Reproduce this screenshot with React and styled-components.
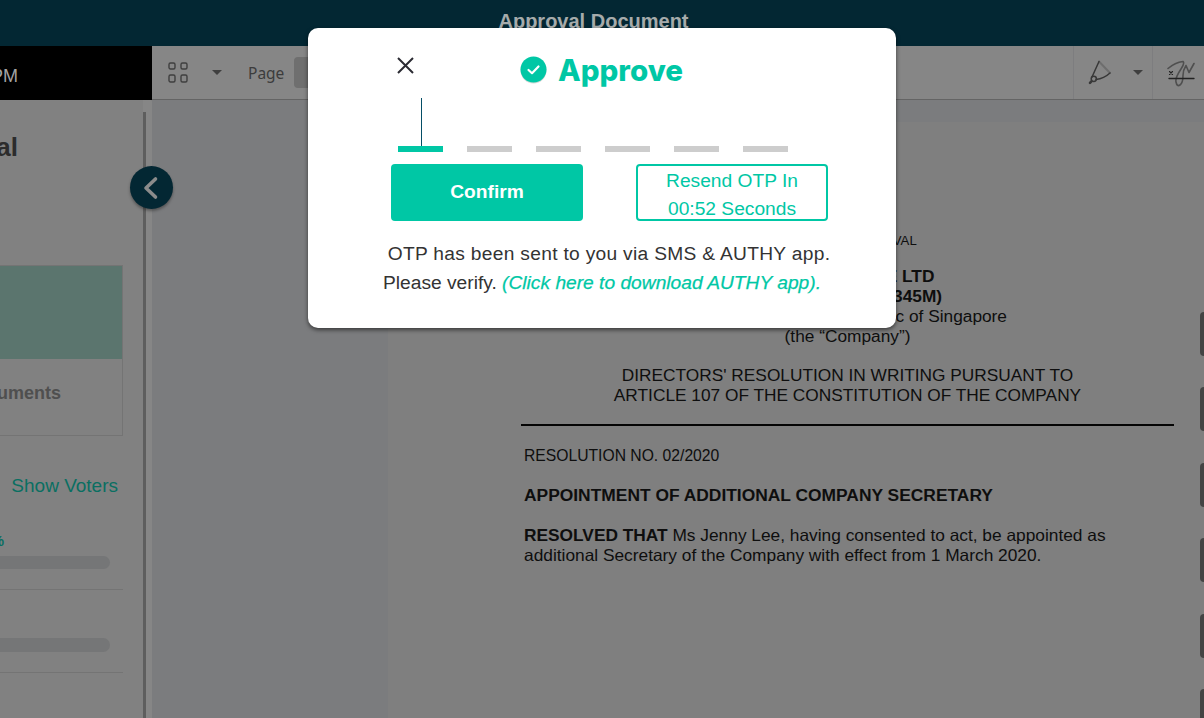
import React from "react";
import styled, { createGlobalStyle } from "styled-components";

const Global = createGlobalStyle`
  html, body { margin: 0; padding: 0; background: #7f7f7f; }
  * { box-sizing: border-box; }
`;

const Screen = styled.div`
  position: relative;
  width: 1204px;
  height: 718px;
  overflow: hidden;
  display: flex;
  flex-direction: column;
  font-family: "Liberation Sans", Arial, sans-serif;
`;

const Header = styled.header`
  height: 46px;
  flex: none;
  background: #032733;
  color: #a6abab;
  font-size: 20px;
  font-weight: 700;
  line-height: 42px;
  text-align: center;
  padding-left: 7px;
  padding-right: 24px;
  overflow: hidden;
`;

const Workspace = styled.div`
  flex: 1;
  min-height: 0;
  display: flex;
`;

const Sidebar = styled.aside`
  width: 152px;
  flex: none;
  display: flex;
  flex-direction: column;
  background: #818181;
`;

const Clock = styled.div`
  height: 54px;
  flex: none;
  background: #000;
  color: #a3a3a3;
  font-size: 18px;
  line-height: 60px;
  padding-right: 134px;
  display: flex;
  justify-content: flex-end;
  white-space: nowrap;
`;

const SideBody = styled.div`
  flex: 1;
  min-height: 0;
  display: flex;
`;

const SideContent = styled.div`
  width: 143px;
  flex: none;
  overflow: hidden;
  display: flex;
  flex-direction: column;
`;

const SideTitle = styled.h2`
  margin: 32px 0 0;
  padding-right: 125px;
  display: flex;
  justify-content: flex-end;
  white-space: nowrap;
  font-size: 26px;
  line-height: 30px;
  font-weight: 700;
  color: #2c2c2c;
`;

const DocCard = styled.div`
  margin: 103px 20px 0 -10px;
  height: 171px;
  border: 1px solid #747474;
  display: flex;
  flex-direction: column;
`;

const DocThumb = styled.div`
  height: 93px;
  flex: none;
  background: #5b756e;
`;

const DocLabel = styled.div`
  flex: 1;
  display: flex;
  justify-content: flex-end;
  align-items: center;
  padding: 0 61px 8px 0;
  white-space: nowrap;
  font-size: 18px;
  font-weight: 700;
  color: #4f4f4f;
`;

const VotersLink = styled.div`
  margin-top: 39px;
  padding-right: 25px;
  text-align: right;
  font-size: 19px;
  line-height: 22px;
  color: #0a6f62;
`;

const Percent = styled.div`
  margin-top: 37px;
  height: 14px;
  padding-right: 139px;
  display: flex;
  justify-content: flex-end;
  white-space: nowrap;
  font-size: 15px;
  line-height: 14px;
  font-weight: 700;
  color: #0a6f62;
`;

const VoteBar = styled.div`
  margin: ${(p) => p.$top}px 33px 0 -20px;
  height: ${(p) => p.$h}px;
  flex: none;
  border-radius: 7px;
  background: #757677;
`;

const SideRule = styled.div`
  margin: ${(p) => p.$top}px 20px 0 0;
  height: 1px;
  flex: none;
  background: #747474;
`;

const ScrollTrack = styled.div`
  width: 9px;
  flex: none;
  background: #868686;
  padding-top: 12px;
`;

const ScrollThumb = styled.div`
  width: 3px;
  height: 100%;
  background: #5e5e5e;
`;

const CollapseButton = styled.button`
  position: absolute;
  left: 130px;
  top: 166px;
  width: 43px;
  height: 43px;
  padding: 0;
  border: 0;
  border-radius: 50%;
  background: #032733;
  box-shadow: 0 2px 3px rgba(0, 0, 0, 0.35);
  display: flex;
  align-items: center;
  justify-content: center;
`;

const Viewer = styled.main`
  flex: 1;
  min-width: 0;
  display: flex;
  flex-direction: column;
  position: relative;
`;

const Toolbar = styled.div`
  height: 54px;
  flex: none;
  display: flex;
  align-items: center;
  background: #868686;
  border-bottom: 1px solid #646464;
  box-shadow: 0 1px 1px rgba(0, 0, 0, 0.15);
`;

const ToolIcon = styled.div`
  display: flex;
  align-items: center;
  flex: none;
  margin-left: ${(p) => p.$left}px;
`;

const Caret = styled.span`
  flex: none;
  width: 0;
  height: 0;
  margin-left: ${(p) => p.$left}px;
  border-left: 5.5px solid transparent;
  border-right: 5.5px solid transparent;
  border-top: 5.5px solid #3f3f3f;
`;

const PageLabel = styled.span`
  margin-left: 26px;
  font-family: "Noto Sans", "Open Sans", sans-serif;
  font-size: 15.5px;
  color: #3c3c3c;
`;

const PageInput = styled.div`
  margin-left: 10px;
  width: 60px;
  height: 31px;
  border-radius: 4px;
  background: #6f6f6f;
`;

const ToolGroup = styled.div`
  height: 100%;
  display: flex;
  align-items: center;
  flex: none;
  margin-left: ${(p) => (p.$push ? "auto" : "0")};
  width: ${(p) => p.$w}px;
  border-left: 1px solid #7d7d7f;
`;

const ViewerBody = styled.div`
  flex: 1;
  min-height: 0;
  background: #7b7c7e;
  padding: 22px 0 0 236px;
  display: flex;
`;

const Paper = styled.article`
  flex: 1;
  background: #7f7f7f;
  padding: 109px 30px 0 133px;
  color: #0e0e0e;
  line-height: 20px;
`;

const Centered = styled.p`
  margin: ${(p) => p.$top || 0}px 0 0;
  padding-right: ${(p) => p.$nudge || 0}px;
  text-align: center;
  white-space: nowrap;
  font-size: ${(p) => p.$size || 17.3}px;
  font-weight: ${(p) => (p.$bold ? 700 : 400)};
  line-height: ${(p) => p.$lh || 20}px;
`;

const DocRule = styled.hr`
  margin: 19px 0 0;
  border: 0;
  height: 2px;
  background: #050505;
`;

const DocLine = styled.p`
  margin: ${(p) => p.$top}px 0 0 3px;
  font-size: ${(p) => p.$size || 17.32}px;
  white-space: nowrap;
  font-weight: ${(p) => (p.$bold ? 700 : 400)};
`;

const SideTabs = styled.div`
  position: absolute;
  right: 0;
  top: 266px;
  display: flex;
  flex-direction: column;
  gap: 31.4px;
`;

const SideTab = styled.div`
  width: 4px;
  height: 44px;
  background: #444;
  border-radius: 8px 0 0 8px;
`;

const Modal = styled.section`
  position: absolute;
  z-index: 2;
  left: 308px;
  top: 28px;
  width: 588px;
  height: 300px;
  background: #fff;
  border-radius: 10px;
  box-shadow: 0 2px 4px rgba(0, 0, 0, 0.55);
  padding: 29px 68px 0 83px;
  display: flex;
  flex-direction: column;
`;

const ModalHead = styled.div`
  height: 27px;
  flex: none;
  display: flex;
  align-items: center;
`;

const CloseButton = styled.button`
  width: 19px;
  height: 19px;
  margin-left: 5px;
  margin-top: -11px;
  padding: 0;
  border: 0;
  background: none;
  display: flex;
`;

const ModalTitle = styled.h1`
  margin: 0 0 0 105px;
  display: flex;
  align-items: center;
  gap: 11px;
  font-family: "Inter", sans-serif;
  font-size: 29.5px;
  font-weight: 800;
  line-height: 25px;
  color: #00c7a5;
  white-space: nowrap;
`;

const OtpRow = styled.div`
  margin-top: 14px;
  padding-left: 7px;
  height: 54px;
  flex: none;
  display: flex;
  gap: 24px;
`;

const OtpCell = styled.div`
  position: relative;
  width: 45px;
  border-bottom: 6px solid ${(p) => (p.$active ? "#00c7a5" : "#cdcdcd")};
`;

const OtpCursor = styled.span`
  position: absolute;
  left: 23px;
  top: 0;
  bottom: 0;
  width: 1px;
  background: #054e66;
`;

const Actions = styled.div`
  margin-top: 12px;
  display: flex;
  justify-content: space-between;
  flex: none;
`;

const ConfirmButton = styled.button`
  width: 192px;
  height: 57px;
  border: 0;
  border-radius: 4px;
  background: #00c7a5;
  color: #fff;
  font-family: "Liberation Sans", sans-serif;
  font-size: 19.2px;
  font-weight: 700;
  padding: 0 0 2px;
`;

const ResendButton = styled.button`
  width: 192px;
  height: 57px;
  border: 2px solid #00c7a5;
  border-radius: 4px;
  background: #fff;
  color: #00c7a5;
  font-family: "Liberation Sans", sans-serif;
  font-size: 19.2px;
  line-height: 28px;
  padding: 1px 0 0;
`;

const Note = styled.p`
  margin: 18px -68px 0 -83px;
  text-align: center;
  font-size: 19.2px;
  line-height: 29px;
  color: #333;
  white-space: nowrap;
`;

const NoteLead = styled.span`
  display: inline-block;
  margin-left: 14px;
  letter-spacing: 0.3px;
`;

const NoteLink = styled.em`
  color: #00c7a5;
  -webkit-text-stroke: 0.25px #00c7a5;
`;

const GridIcon = () => (
  <svg width="22" height="24" viewBox="0 0 22 24" fill="none" stroke="#3f3f3f" strokeWidth="1.4">
    <rect x="1" y="2" width="6" height="6" rx="1.5" />
    <rect x="13" y="2" width="6" height="6" rx="1.5" />
    <rect x="1" y="14" width="6" height="7" rx="1.5" />
    <rect x="13" y="14" width="6" height="7" rx="1.5" />
  </svg>
);

const PenIcon = () => (
  <svg width="26" height="26" viewBox="0 0 26 26" fill="none" strokeLinecap="round">
    <path d="M11 1.5 L22 13" stroke="#6e6e6e" strokeWidth="2" />
    <path d="M11 1.5 L4 17" stroke="#383838" strokeWidth="1.5" />
    <path d="M22 13 Q16 18.5 8 19.5" stroke="#383838" strokeWidth="1.5" />
    <circle cx="5.8" cy="18.8" r="2.6" stroke="#383838" strokeWidth="1.5" />
    <path d="M3.4 21.4 L2 22.8" stroke="#383838" strokeWidth="2.6" />
  </svg>
);

const SignIcon = () => (
  <svg width="28" height="28" viewBox="0 0 28 28" fill="none" strokeLinecap="round" strokeLinejoin="round">
    <path d="M1 9.5 Q8 3.5 16 2.5 Q18 4 14 10 Q8 19 9 23 Q10 28 13 26 Q16 24 16 16.5 Q16 11 19 6.5 L22 13.5 L27 4.5" stroke="#4f4f4f" strokeWidth="1.6" />
    <path d="M2 19.5 H27" stroke="#222" strokeWidth="1.3" />
    <path d="M2.5 12.5 L5.5 15.5 M5.5 12.5 L2.5 15.5" stroke="#222" strokeWidth="1.1" />
  </svg>
);

export default function App() {
  return (
    <Screen>
      <Global />
      <Header>Approval Document</Header>
      <Workspace>
        <Sidebar>
          <Clock>04:15 PM</Clock>
          <SideBody>
            <SideContent>
              <SideTitle>Approval</SideTitle>
              <DocCard>
                <DocThumb />
                <DocLabel>Documents</DocLabel>
              </DocCard>
              <VotersLink>Show Voters</VotersLink>
              <Percent>50%</Percent>
              <VoteBar $top={8} $h={13} />
              <SideRule $top={20} />
              <VoteBar $top={48} $h={14} />
              <SideRule $top={20} />
            </SideContent>
            <ScrollTrack>
              <ScrollThumb />
            </ScrollTrack>
          </SideBody>
        </Sidebar>
        <Viewer>
          <Toolbar>
            <ToolIcon $left={16}>
              <GridIcon />
            </ToolIcon>
            <Caret $left={22} />
            <PageLabel>Page</PageLabel>
            <PageInput />
            <ToolGroup $push $w={79}>
              <ToolIcon $left={14}>
                <PenIcon />
              </ToolIcon>
              <Caret $left={19} />
            </ToolGroup>
            <ToolGroup $w={52}>
              <ToolIcon $left={14}>
                <SignIcon />
              </ToolIcon>
            </ToolGroup>
          </Toolbar>
          <ViewerBody>
            <Paper>
              <Centered $size={13.2}>COMPANY APPROVAL</Centered>
              <Centered $top={15} $nudge={7} $bold>ABC GROUP PTE LTD</Centered>
              <Centered $bold>(UEN NO. 201812345M)</Centered>
              <Centered>Incorporated in the Republic of Singapore</Centered>
              <Centered>(the “Company”)</Centered>
              <Centered $top={20} $lh={19.5}>DIRECTORS' RESOLUTION IN WRITING PURSUANT TO</Centered>
              <Centered $lh={19.5}>ARTICLE 107 OF THE CONSTITUTION OF THE COMPANY</Centered>
              <DocRule />
              <DocLine $top={20} $size={15.7}>RESOLUTION NO. 02/2020</DocLine>
              <DocLine $top={19} $size={17.4} $bold>APPOINTMENT OF ADDITIONAL COMPANY SECRETARY</DocLine>
              <DocLine $top={20}>
                <b>RESOLVED THAT</b> Ms Jenny Lee, having consented to act, be appointed as
              </DocLine>
              <DocLine $top={0}>
                additional Secretary of the Company with effect from 1 March 2020.
              </DocLine>
            </Paper>
          </ViewerBody>
          <SideTabs>
            {[0, 1, 2, 3, 4, 5].map((i) => (
              <SideTab key={i} />
            ))}
          </SideTabs>
        </Viewer>
      </Workspace>
      <CollapseButton aria-label="Collapse panel">
        <svg width="18" height="24" viewBox="0 0 18 24" fill="none" stroke="#8b8b8b" strokeWidth="3.6" strokeLinecap="round" strokeLinejoin="round">
          <path d="M12.5 3 L3 12 L12.5 21" />
        </svg>
      </CollapseButton>
      <Modal>
        <ModalHead>
          <CloseButton aria-label="Close">
            <svg width="19" height="19" viewBox="0 0 19 19" fill="none" stroke="#2b2b33" strokeWidth="2">
              <path d="M2 2 L17 17 M17 2 L2 17" />
            </svg>
          </CloseButton>
          <ModalTitle>
            <svg width="27" height="29" viewBox="0 0 27 29">
              <circle cx="13.5" cy="14.5" r="13" fill="#a9a9a9" opacity="0.45" />
              <circle cx="13.5" cy="13.5" r="13" fill="#00c7a5" />
              <path d="M8.5 14 L12 17.2 L18.5 10.5" fill="none" stroke="#fff" strokeWidth="2.2" strokeLinecap="round" strokeLinejoin="round" />
            </svg>
            Approve
          </ModalTitle>
        </ModalHead>
        <OtpRow>
          {[0, 1, 2, 3, 4, 5].map((i) => (
            <OtpCell key={i} $active={i === 0}>
              {i === 0 && <OtpCursor />}
            </OtpCell>
          ))}
        </OtpRow>
        <Actions>
          <ConfirmButton>Confirm</ConfirmButton>
          <ResendButton>
            Resend OTP In
            <br />
            00:52 Seconds
          </ResendButton>
        </Actions>
        <Note>
          <NoteLead>OTP has been sent to you via SMS &amp; AUTHY app.</NoteLead>
          <br />
          Please verify. <NoteLink>(Click here to download AUTHY app).</NoteLink>
        </Note>
      </Modal>
    </Screen>
  );
}
